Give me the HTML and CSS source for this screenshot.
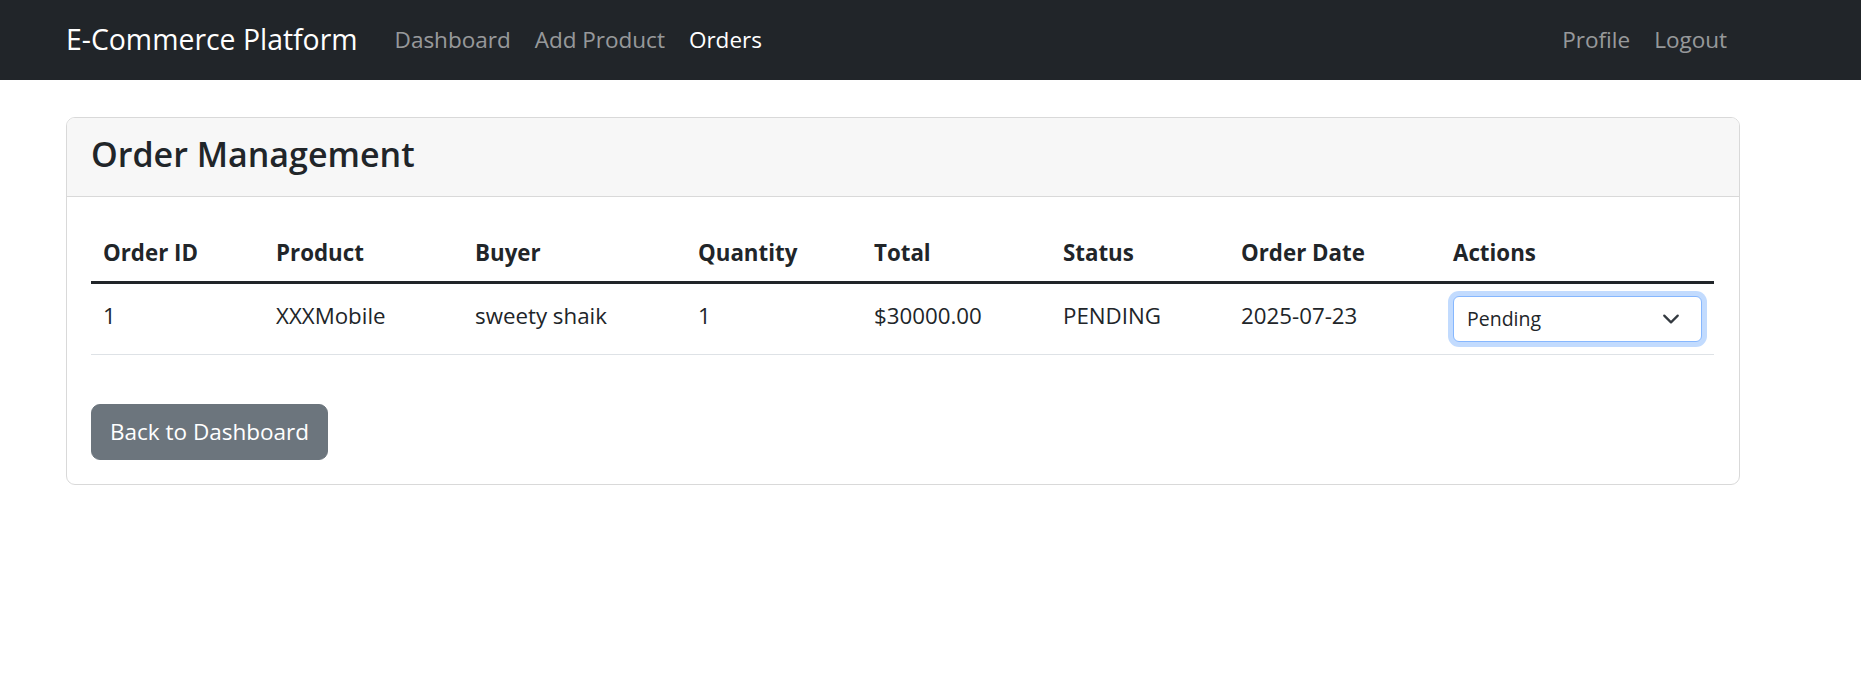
FILE: index.html
```html
<!DOCTYPE html>
<html lang="en">
<head>
<meta charset="utf-8">
<title>Order Management</title>
<link rel="stylesheet" href="styles.css">
</head>
<body>
<nav class="navbar">
  <div class="container nav-inner">
    <a class="brand" href="#">E-Commerce Platform</a>
    <ul class="nav-list">
      <li><a class="nav-link" href="#">Dashboard</a></li>
      <li><a class="nav-link" href="#">Add Product</a></li>
      <li><a class="nav-link active" href="#">Orders</a></li>
    </ul>
    <ul class="nav-list nav-right">
      <li><a class="nav-link" href="#">Profile</a></li>
      <li><a class="nav-link" href="#">Logout</a></li>
    </ul>
  </div>
</nav>

<main class="container">
  <section class="card">
    <div class="card-header">
      <h3 class="card-title">Order Management</h3>
    </div>
    <div class="card-body">
      <table class="table">
        <colgroup>
          <col class="c1"><col class="c2"><col class="c3"><col class="c4">
          <col class="c5"><col class="c6"><col class="c7"><col class="c8">
        </colgroup>
        <thead>
          <tr>
            <th>Order ID</th>
            <th>Product</th>
            <th>Buyer</th>
            <th>Quantity</th>
            <th>Total</th>
            <th>Status</th>
            <th>Order Date</th>
            <th>Actions</th>
          </tr>
        </thead>
        <tbody>
          <tr>
            <td>1</td>
            <td>XXXMobile</td>
            <td>sweety shaik</td>
            <td>1</td>
            <td>$30000.00</td>
            <td>PENDING</td>
            <td>2025-07-23</td>
            <td class="actions">
              <div class="select">
                <span>Pending</span>
                <svg class="chevron" width="18" height="18" viewBox="0 0 16 16"><path d="m2 5 6 6 6-6" fill="none" stroke="#343a40" stroke-width="2" stroke-linecap="round" stroke-linejoin="round"/></svg>
              </div>
            </td>
          </tr>
        </tbody>
      </table>
      <div class="actions-row">
        <a class="btn" href="#">Back to Dashboard</a>
      </div>
    </div>
  </section>
</main>
</body>
</html>
```
FILE: styles.css
```css
* { box-sizing: border-box; }

html, body {
  margin: 0;
  padding: 0;
  background: #ffffff;
}

body {
  font-family: "Open Sans", "Noto Sans", sans-serif;
  font-size: 22.3px;
  line-height: 36px;
  color: #212529;
}

a { text-decoration: none; }

.container {
  width: 1674px;
  margin-left: 66px;
}

/* Navbar */
.navbar {
  background: #212529;
  height: 80px;
}

.nav-inner {
  height: 80px;
  display: flex;
  align-items: center;
}

.brand {
  color: #ffffff;
  font-size: 28.4px;
  line-height: 45px;
  margin-right: 25px;
  margin-top: -2px;
}

.nav-list {
  list-style: none;
  margin: 0;
  padding: 0;
  display: flex;
}

.nav-right {
  margin-left: auto;
  margin-right: 1px;
}

.nav-link {
  display: block;
  padding: 0 12px;
  color: rgba(255, 255, 255, 0.55);
  font-size: 22.5px;
  line-height: 36px;
}

.nav-link.active {
  color: #ffffff;
}

/* Card */
.card {
  margin-top: 37px;
  border: 1px solid #d9d9d9;
  border-radius: 9px;
  overflow: hidden;
}

.card-header {
  background: #f7f7f7;
  border-bottom: 1px solid #d9d9d9;
  padding: 9px 24px 15px;
}

.card-title {
  margin: 0;
  font-size: 34px;
  line-height: 54px;
  font-weight: 600;
  color: #212529;
}

.card-body {
  padding: 24px;
}

/* Table */
.table {
  width: 1623px;
  table-layout: fixed;
  border-collapse: collapse;
  margin-bottom: 24px;
}

.c1 { width: 173px; }
.c2 { width: 199px; }
.c3 { width: 223px; }
.c4 { width: 176px; }
.c5 { width: 189px; }
.c6 { width: 178px; }
.c7 { width: 212px; }
.c8 { width: 273px; }

.table th {
  text-align: left;
  font-weight: 700;
  padding: 14px 12px 10px;
  border-bottom: 3px solid #212529;
  vertical-align: bottom;
}

.table td {
  padding: 14px 12px 10px;
  vertical-align: top;
  border-bottom: 1px solid #dee2e6;
}

.table td.actions {
  padding: 12px;
}

.select {
  height: 46px;
  border: 1px solid #86b7fe;
  border-radius: 6px;
  box-shadow: 0 0 0 5px rgba(13, 110, 253, 0.25);
  padding: 0 21px 0 13px;
  display: flex;
  align-items: center;
  justify-content: space-between;
  font-size: 19.5px;
  line-height: 30px;
  background: #ffffff;
}

.chevron {
  display: block;
}

/* Button */
.actions-row {
  padding-top: 25px;
  display: flex;
}

.btn {
  display: block;
  background: #6c757d;
  border: 1px solid #6c757d;
  color: #ffffff;
  border-radius: 9px;
  padding: 9px 18px;
  font-size: 22.5px;
  line-height: 36px;
}
```
